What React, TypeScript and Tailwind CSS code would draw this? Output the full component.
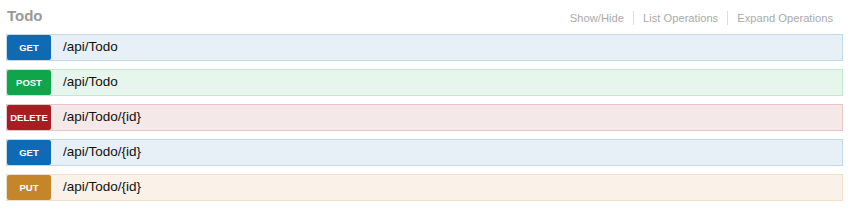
const ops = [
  { method: 'GET', path: '/api/Todo', badge: 'bg-[#0f6ab4]', row: 'bg-[#e7f0f7] border-[#c3d9ec]' },
  { method: 'POST', path: '/api/Todo', badge: 'bg-[#10a54a]', row: 'bg-[#e7f6ec] border-[#c3e8d1]' },
  { method: 'DELETE', path: '/api/Todo/{id}', badge: 'bg-[#a41e22]', row: 'bg-[#f5e8e8] border-[#e8c6c7]' },
  { method: 'GET', path: '/api/Todo/{id}', badge: 'bg-[#0f6ab4]', row: 'bg-[#e7f0f7] border-[#c3d9ec]' },
  { method: 'PUT', path: '/api/Todo/{id}', badge: 'bg-[#c5862b]', row: 'bg-[#faf2e9] border-[#f0e0ca]' },
]

const links = ['Show/Hide', 'List Operations', 'Expand Operations']

export default function App() {
  return (
    <div className="w-[856px] h-[213px] bg-white pl-[6px] pr-[13px] font-['Liberation_Sans',Arial,sans-serif]">
      <div className="flex justify-between h-[34px]">
        <h2 className="pt-[6px] pl-px text-[15px] leading-[20px] font-bold text-[#999]">Todo</h2>
        <ul className="flex items-start pt-[11px]">
          {links.map((l, i) => (
            <li
              key={l}
              className={`px-[9px] text-[11.2px] leading-[14px] text-[#aaa] ${i > 0 ? 'border-l border-[#ddd]' : ''} ${i === links.length - 1 ? 'pr-[10px]' : ''}`}
            >
              {l}
            </li>
          ))}
        </ul>
      </div>
      <ul className="flex flex-col gap-[8px]">
        {ops.map((op, i) => (
          <li key={i} className={`flex items-center h-[27px] border ${op.row}`}>
            <span className={`flex items-center justify-center w-[44px] h-full pt-[2px] rounded-[2px] text-white font-bold text-[9.5px] ${op.badge}`}>
              {op.method}
            </span>
            <span className="pl-[12px] text-[13.5px] text-[#111]">{op.path}</span>
          </li>
        ))}
      </ul>
    </div>
  )
}
